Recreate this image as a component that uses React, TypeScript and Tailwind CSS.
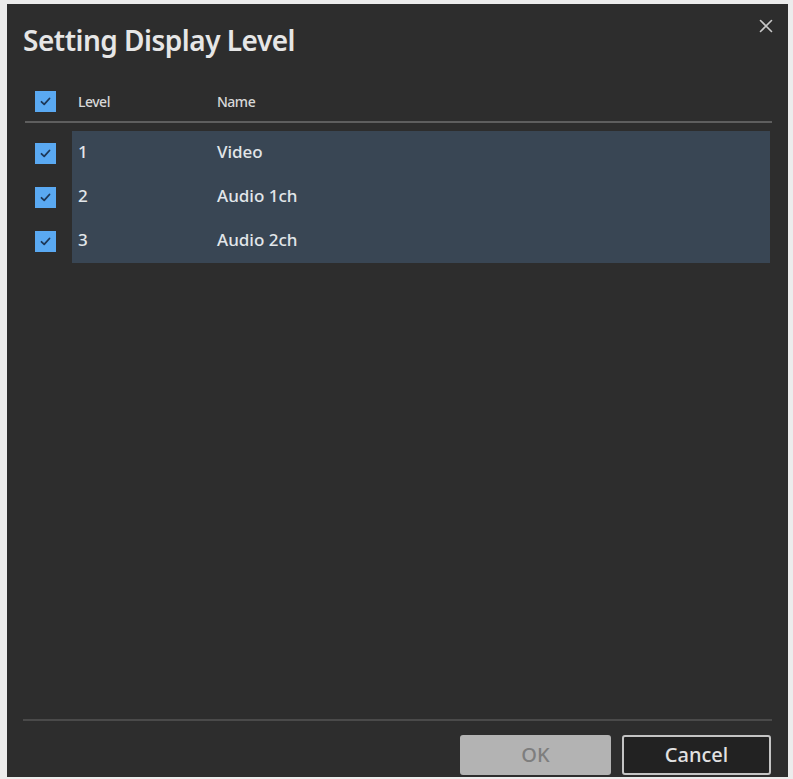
import React from "react";

const Check = () => (
  <div className="w-[21px] h-[21px] bg-[#5aa9f2] flex items-center justify-center shrink-0">
    <svg width="13" height="13" viewBox="0 0 13 13" fill="none">
      <path d="M2.5 6.8 L5.2 9.3 L10.5 3.5" stroke="#1d3757" strokeWidth="1.8" strokeLinecap="round" strokeLinejoin="round" />
    </svg>
  </div>
);

const rows = [
  { level: "1", name: "Video" },
  { level: "2", name: "Audio 1ch" },
  { level: "3", name: "Audio 2ch" },
];

export default function App() {
  return (
    <div className="w-[793px] h-[779px] bg-[#ececec] pt-[4px] pl-[7px]" style={{ fontFamily: '"Noto Sans", "Open Sans", sans-serif' }}>
      <div className="w-[781px] h-[773px] bg-[#2d2d2d] flex flex-col relative">
        <button className="absolute right-[14px] top-[14px] w-[16px] h-[16px] flex items-center justify-center">
          <svg width="14" height="14" viewBox="0 0 14 14">
            <path d="M1.5 1.5 L12.5 12.5 M12.5 1.5 L1.5 12.5" stroke="#c8c8c8" strokeWidth="1.6" strokeLinecap="round" />
          </svg>
        </button>
        <div className="pl-[16px] pt-[17px] h-[77px] text-[28px] leading-[38px] font-semibold text-[#e6e6e6] tracking-[-0.5px]">
          Setting Display Level
        </div>
        <div className="px-[18px]">
          <div className="flex items-center h-[40px] pl-[10px] text-[14px] font-medium text-[#d8d8d8]">
            <Check />
            <div className="w-[161px] pl-[22px] tracking-[-0.5px]">Level</div>
            <div className="tracking-[-0.5px]">Name</div>
          </div>
          <div className="h-[2px] bg-[#5e5e5e] mr-[-2px]" />
          <div className="pt-[8px] flex flex-col">
            {rows.map((r) => (
              <div key={r.level} className="flex items-center h-[44px]">
                <div className="w-[47px] pl-[10px] flex items-center">
                  <Check />
                </div>
                <div className="flex-1 h-full bg-[#394654] flex items-center text-[17px] font-medium text-[#e2e6ea] pb-[2px]">
                  <div className="w-[145px] pl-[6px]">{r.level}</div>
                  <div>{r.name}</div>
                </div>
              </div>
            ))}
          </div>
        </div>
        <div className="flex-1" />
        <div className="mx-[16px] h-[2px] bg-[#4a4a4a]" />
        <div className="flex justify-end gap-[11px] pr-[17px] pt-[14px] pb-[2px]">
          <button className="w-[151px] h-[40px] rounded-[3px] bg-[#b3b3b3] text-[#7e7e7e] text-[20px] font-medium flex items-center justify-center">
            OK
          </button>
          <button className="w-[149px] h-[40px] rounded-[3px] border-2 border-[#c4c4c4] bg-[#222222] text-[#e2e2e2] text-[20px] font-medium flex items-center justify-center">
            Cancel
          </button>
        </div>
      </div>
    </div>
  );
}
